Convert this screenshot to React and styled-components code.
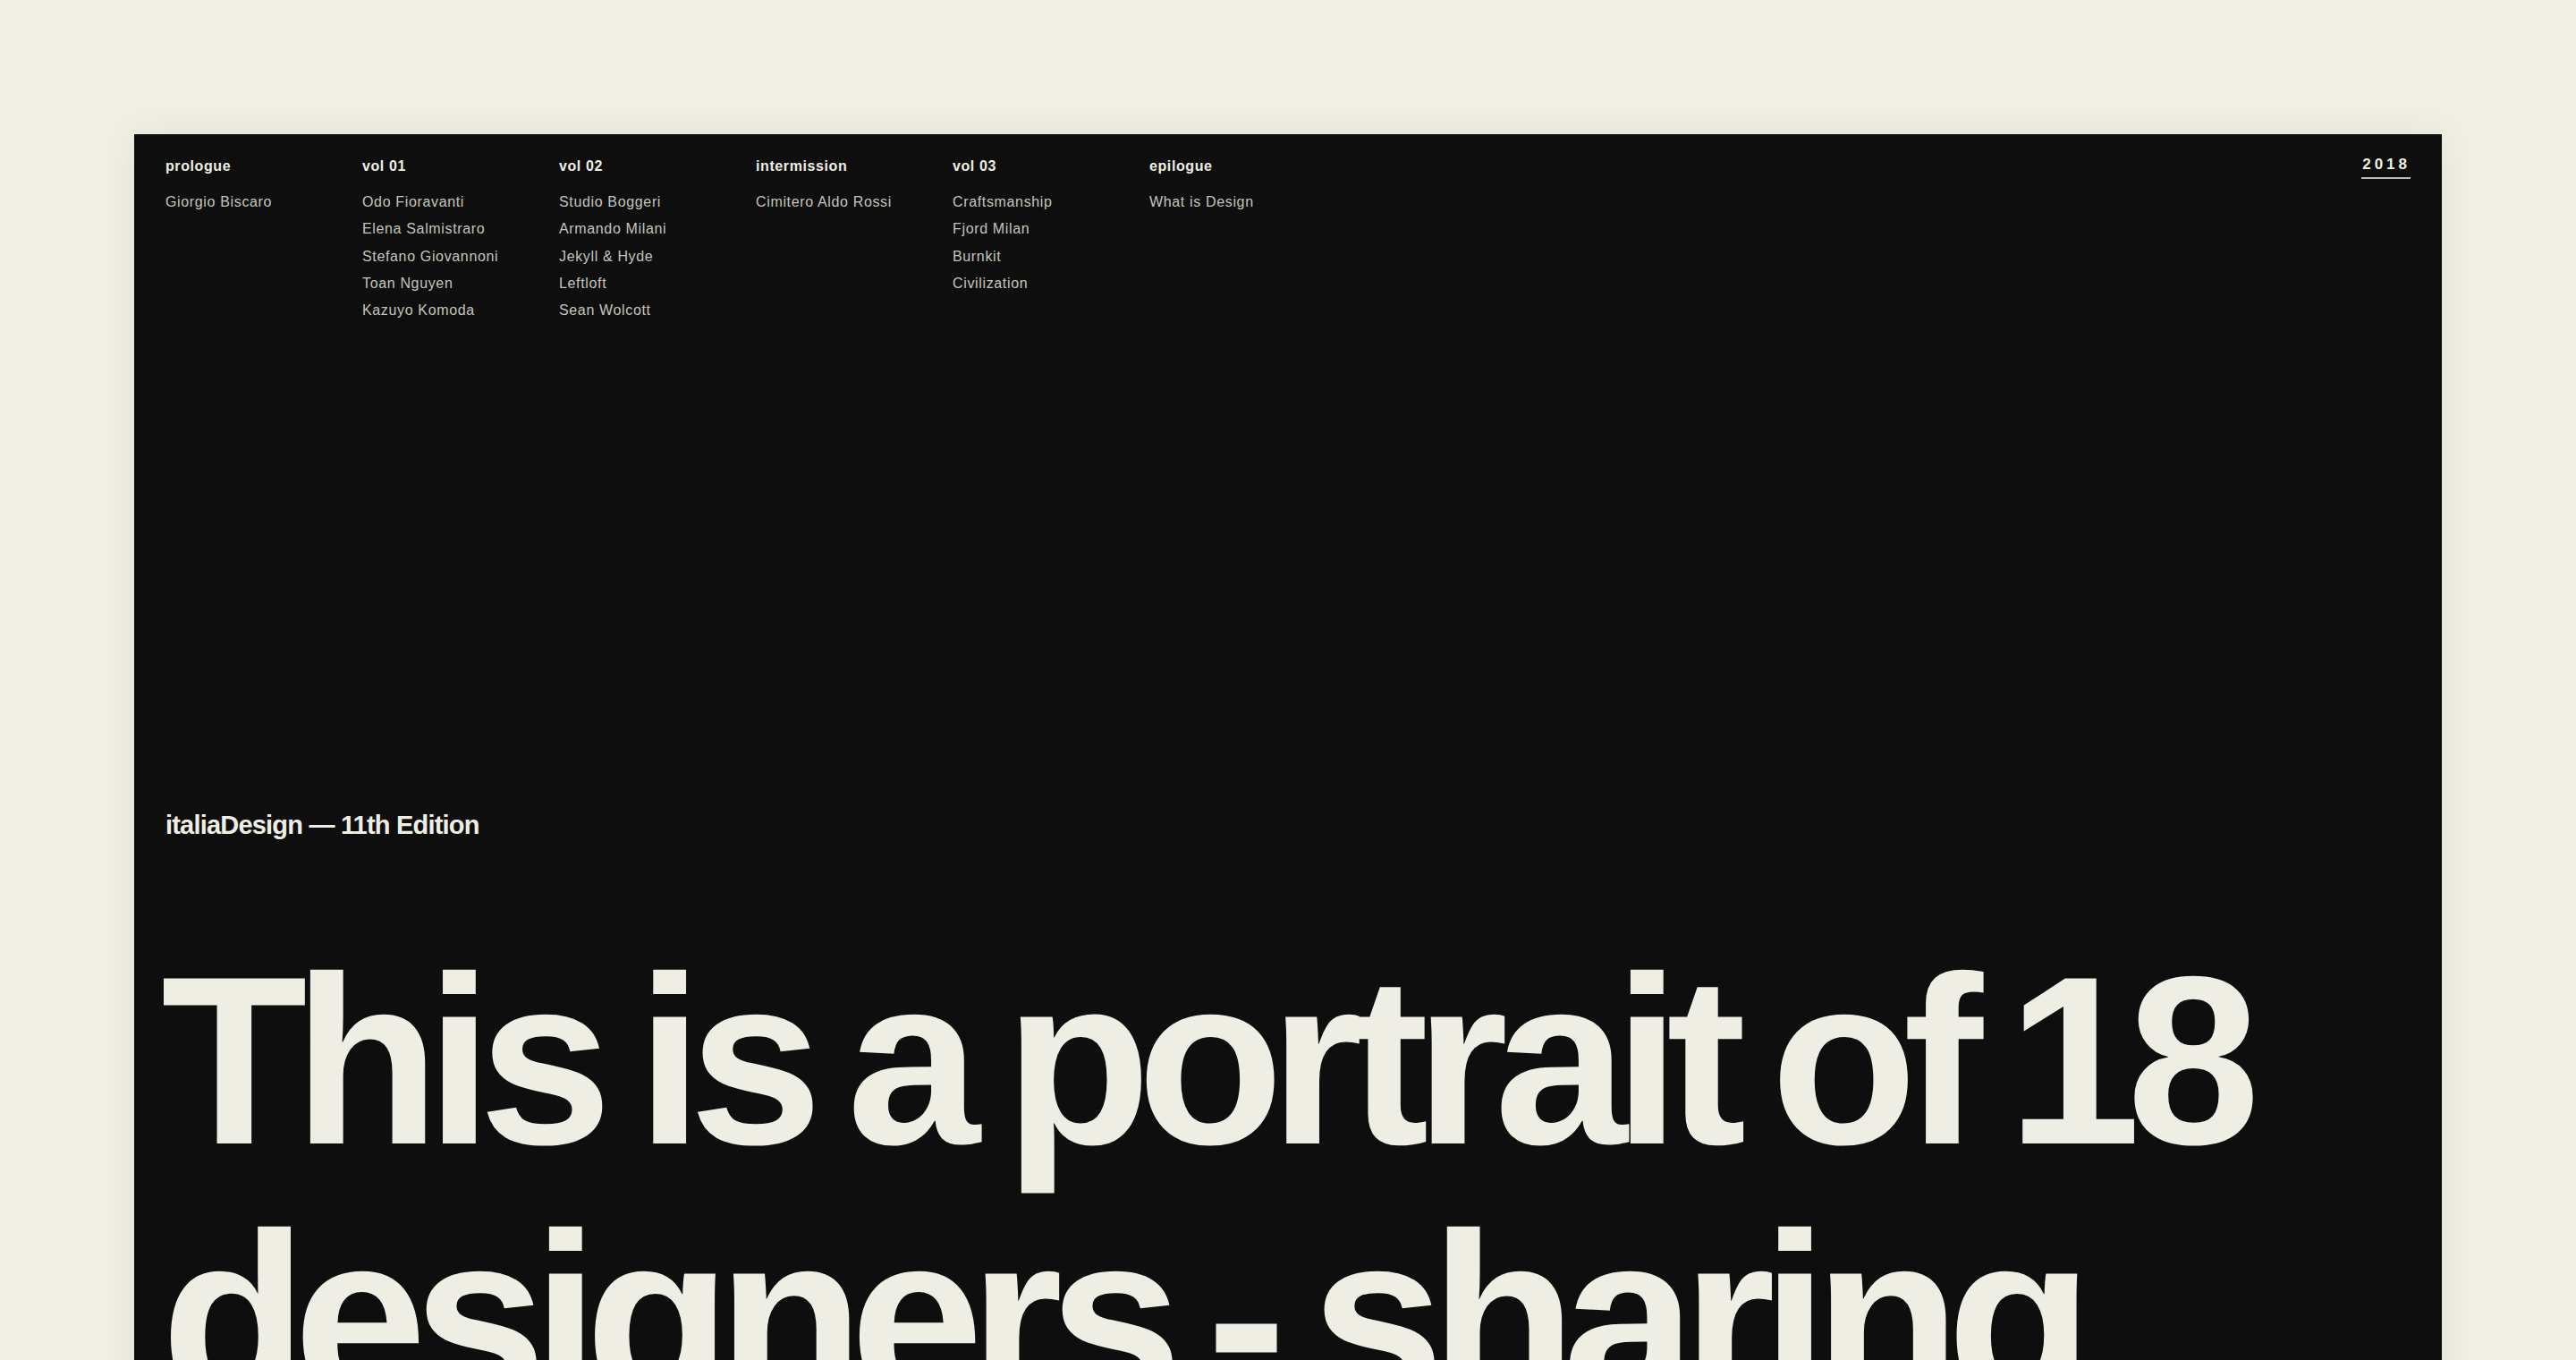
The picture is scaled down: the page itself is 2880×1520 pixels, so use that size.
import React from "react";
import styled, { createGlobalStyle } from "styled-components";

const GlobalStyle = createGlobalStyle`
    html, body {
        margin: 0;
        padding: 0;
        background-color: #f0efe5;
    }
    body {
        font-family: "Liberation Sans", Arial, sans-serif;
        -webkit-font-smoothing: antialiased;
    }
`

const Page = styled.div`
    padding: 150px 150px 0;
`

const Panel = styled.main`
    background-color: #0e0e0e;
    box-shadow: 0 0 40px rgba(0, 0, 0, 0.06);
    padding: 26px 35px 120px;
    color: #efeee4;
`

const TopBar = styled.header`
    display: flex;
    justify-content: space-between;
    align-items: flex-start;
`

const Nav = styled.nav`
    display: grid;
    grid-template-columns: repeat(6, 220px);
`

const Column = styled.div`
    display: flex;
    flex-direction: column;
`

const ColumnTitle = styled.div`
    font-size: 16px;
    line-height: 20px;
    font-weight: 700;
    letter-spacing: 0.6px;
    color: #efeee4;
    margin-bottom: 15px;
`

const Item = styled.a`
    font-size: 16px;
    line-height: 30.3px;
    letter-spacing: 0.65px;
    color: #c6c5bc;
    text-decoration: none;
    white-space: nowrap;
`

const Year = styled.div`
    margin-top: -2px;
    font-size: 17px;
    line-height: 20px;
    font-weight: 700;
    letter-spacing: 4px;
    color: #efeee4;
    padding: 0 0 4px 1px;
    border-bottom: 2px solid #bdbcb3;
`

const Edition = styled.div`
    margin-top: 542px;
    font-size: 29px;
    line-height: 36px;
    font-weight: 700;
    letter-spacing: -0.8px;
    color: #efeee4;
`

const Headline = styled.h1`
    margin: 102px 0 0 -5px;
    font-size: 268px;
    line-height: 287px;
    font-weight: 700;
    letter-spacing: -0.058em;
    word-spacing: -0.06em;
    color: #efeee4;
`

const sections = [
    { title: "prologue", items: ["Giorgio Biscaro"] },
    { title: "vol 01", items: ["Odo Fioravanti", "Elena Salmistraro", "Stefano Giovannoni", "Toan Nguyen", "Kazuyo Komoda"] },
    { title: "vol 02", items: ["Studio Boggeri", "Armando Milani", "Jekyll & Hyde", "Leftloft", "Sean Wolcott"] },
    { title: "intermission", items: ["Cimitero Aldo Rossi"] },
    { title: "vol 03", items: ["Craftsmanship", "Fjord Milan", "Burnkit", "Civilization"] },
    { title: "epilogue", items: ["What is Design"] },
]

const App = () => {
    return (
        <Page>
            <GlobalStyle/>
            <Panel>
                <TopBar>
                    <Nav>
                        {sections.map((section) => (
                            <Column key={section.title}>
                                <ColumnTitle>{section.title}</ColumnTitle>
                                {section.items.map((item) => (
                                    <Item key={item}>{item}</Item>
                                ))}
                            </Column>
                        ))}
                    </Nav>
                    <Year>2018</Year>
                </TopBar>
                <Edition>italiaDesign — 11th Edition</Edition>
                <Headline>
                    This is a portrait of 18<br/>
                    designers - sharing their stories and visions of Italian design.
                </Headline>
            </Panel>
        </Page>
    );
}

export default App
